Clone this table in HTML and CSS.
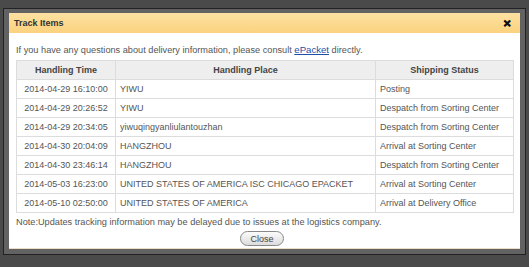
FILE: index.html
```html
<!DOCTYPE html>
<html>
<head>
<meta charset="utf-8">
<link rel="stylesheet" href="styles.css">
</head>
<body>
<div class="frame">
  <div class="panel">
    <div class="header">
      <span class="title">Track Items</span>
      <span class="close-x">&#x2715;</span>
    </div>
    <div class="content">
      <p class="intro">If you have any questions about delivery information, please consult <a class="link" href="#">ePacket</a> directly.</p>
      <table class="track">
        <colgroup>
          <col class="c1"><col class="c2"><col class="c3">
        </colgroup>
        <thead>
          <tr><th>Handling Time</th><th>Handling Place</th><th>Shipping Status</th></tr>
        </thead>
        <tbody>
          <tr><td class="time">2014-04-29 16:10:00</td><td>YIWU</td><td>Posting</td></tr>
          <tr><td class="time">2014-04-29 20:26:52</td><td>YIWU</td><td>Despatch from Sorting Center</td></tr>
          <tr><td class="time">2014-04-29 20:34:05</td><td>yiwuqingyanliulantouzhan</td><td>Despatch from Sorting Center</td></tr>
          <tr><td class="time">2014-04-30 20:04:09</td><td>HANGZHOU</td><td>Arrival at Sorting Center</td></tr>
          <tr><td class="time">2014-04-30 23:46:14</td><td>HANGZHOU</td><td>Despatch from Sorting Center</td></tr>
          <tr><td class="time">2014-05-03 16:23:00</td><td>UNITED STATES OF AMERICA ISC CHICAGO EPACKET</td><td>Arrival at Sorting Center</td></tr>
          <tr><td class="time">2014-05-10 02:50:00</td><td>UNITED STATES OF AMERICA</td><td>Arrival at Delivery Office</td></tr>
        </tbody>
      </table>
      <p class="note">Note:Updates tracking information may be delayed due to issues at the logistics company.</p>
      <div class="actions"><button class="btn">Close</button></div>
    </div>
  </div>
</div>
</body>
</html>
```

FILE: styles.css
```css
html, body {
  margin: 0;
  padding: 0;
  background: #4a4a4a;
  font-family: "Liberation Sans", Arial, sans-serif;
}
.frame {
  margin: 8px 3px 0 3px;
  border: 1px solid #222;
  padding: 4px 5px 5px 5px;
  background: #626262;
}
.panel {
  background: #fff;
  border-bottom: 1px solid #eadfc6;
  height: 236px;
  box-sizing: border-box;
}
.header {
  height: 20px;
  background: linear-gradient(#fde1a2, #fbd27e);
  display: flex;
  align-items: center;
  justify-content: space-between;
  padding: 0 9px 0 5px;
}
.title {
  font-size: 9px;
  font-weight: bold;
  color: #333;
}
.close-x {
  font-size: 10px;
  font-weight: bold;
  color: #111;
  -webkit-text-stroke: 0.6px #111;
}
.content {
  padding: 11px 6px 0 7px;
}
.intro {
  margin: 0 0 4px 0;
  font-size: 9.2px;
  line-height: 12px;
  color: #555;
}
.link {
  color: #1f4fa8;
  font-size: 9.6px;
  text-decoration: underline;
}
.track {
  width: 498px;
  border-collapse: collapse;
  table-layout: fixed;
  font-size: 9px;
  color: #555;
}
.c1 { width: 99px; }
.c3 { width: 138px; }
.track th, .track td {
  border: 1px solid #dcdcdc;
  height: 18px;
  padding: 0 4px;
  white-space: nowrap;
  overflow: hidden;
}
.track th {
  background: #eeeeee;
  color: #444;
  font-weight: bold;
  font-size: 9px;
  text-align: center;
}
.track td { text-align: left; }
.track td.time { text-align: center; }
.note {
  margin: 3px 0 0 0;
  font-size: 9.2px;
  line-height: 12px;
  color: #555;
}
.actions {
  display: flex;
  justify-content: center;
  margin-top: 3px;
  padding-right: 6px;
}
.btn {
  width: 44px;
  height: 15px;
  border: 1px solid #888;
  border-radius: 8px;
  background: linear-gradient(#fbfbfb, #dcdcdc);
  font-family: "Liberation Sans", Arial, sans-serif;
  font-size: 9px;
  color: #444;
  padding: 0;
}
```
